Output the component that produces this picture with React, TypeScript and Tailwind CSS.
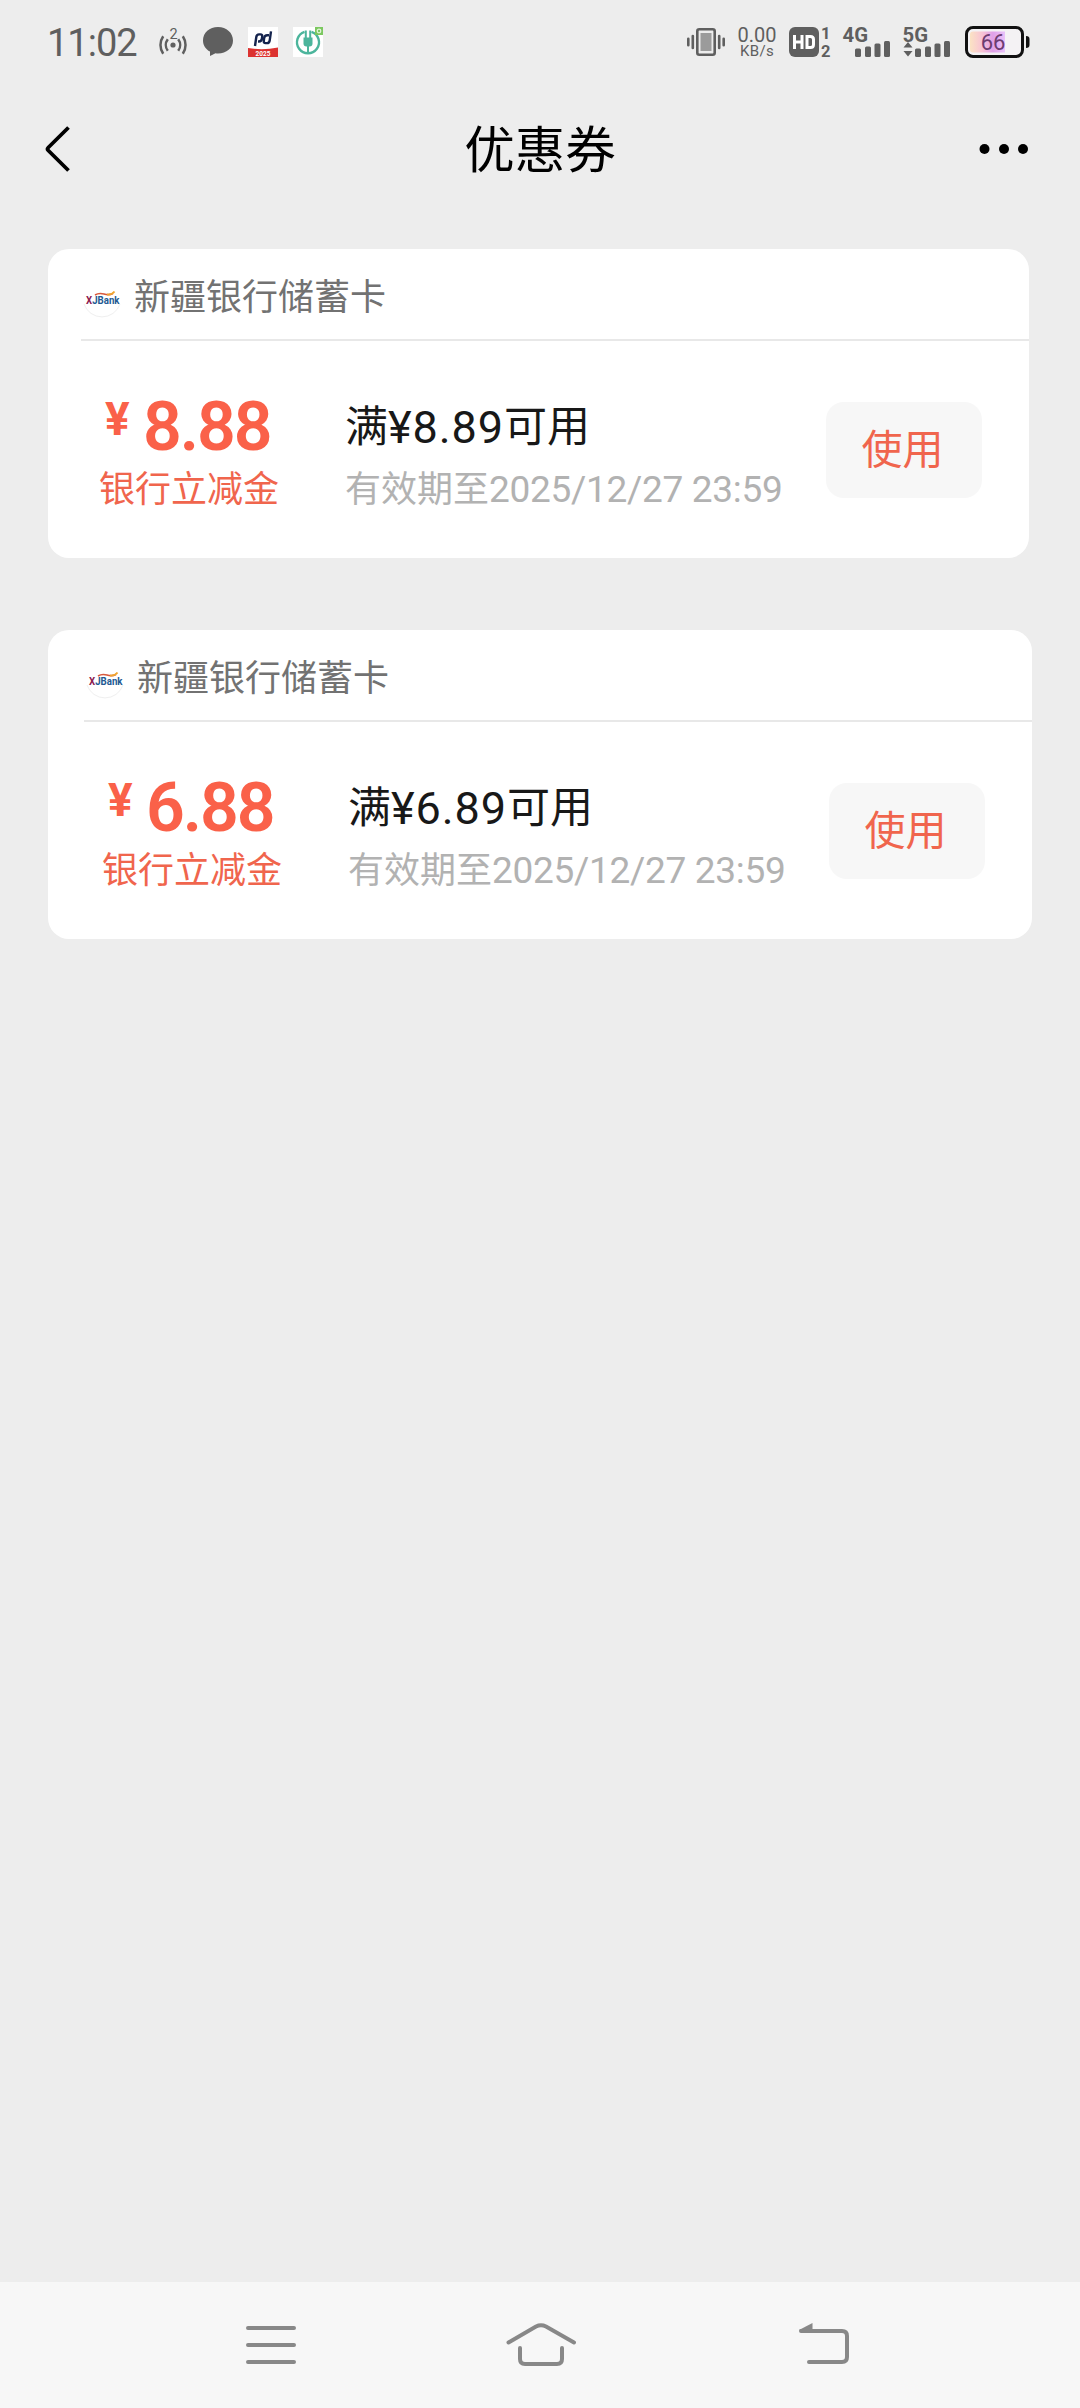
import { useState } from 'react';
import clsx from 'clsx';

interface Coupon {
  id: number;
  bank: string;
  amount: string;
  type: string;
  threshold: string;
  expires: string;
}

const coupons: Coupon[] = [
  {
    id: 1,
    bank: '新疆银行储蓄卡',
    amount: '8.88',
    type: '银行立减金',
    threshold: '8.89',
    expires: '2025/12/27 23:59',
  },
  {
    id: 2,
    bank: '新疆银行储蓄卡',
    amount: '6.88',
    type: '银行立减金',
    threshold: '6.89',
    expires: '2025/12/27 23:59',
  },
];

function HotspotIcon() {
  return (
    <svg className="overflow-visible" width="30" height="30" viewBox="0 0 30 30" fill="none" stroke="#5f5f5f" strokeWidth="2.5">
      <path d="M5.2 9.2a15.5 15.5 0 0 0 0 17.6M24.8 9.2a15.5 15.5 0 0 1 0 17.6" />
      <path d="M9.8 12.2a9.6 9.6 0 0 0 0 11.6M20.2 12.2a9.6 9.6 0 0 1 0 11.6" />
      <circle cx="15" cy="18" r="2.6" fill="#5f5f5f" stroke="none" />
      <text x="15.500" y="12" textAnchor="middle" fontSize="14.500" fill="#5f5f5f" stroke="none">2</text>
    </svg>
  );
}

function BubbleIcon() {
  return (
    <svg width="30" height="30" viewBox="0 0 30 30" fill="#5f5f5f">
      <path d="M15 0C6.500 0 0 5.800 0 13.400c0 4.700 2.700 8.700 7 11.200V29l5.500-2.800c.8.1 1.700.2 2.500.2 8.500 0 15-5.500 15-13S23.500 0 15 0z" />
    </svg>
  );
}

function BankAppIcon() {
  return (
    <svg className="overflow-visible" width="30" height="30" viewBox="0 0 30 30" fill="none">
      <rect width="30" height="30" fill="#fff" />
      <path d="M0 21q15 2.500 30-.5V30H0z" fill="#dc3230" />
      <g stroke="#14234d" strokeWidth="2.400" strokeLinejoin="round">
        <path d="M7 19L8.300 10q.4-2.600 2.700-2.600h1.500q2 0 1.700 2.300l-.3 2q-.4 2.800-3 2.800H10" />
        <path d="M23 4.300L21.700 13.500q-.4 2.600-2.700 2.600h-1.500q-2 0-1.700-2.300l.4-3q.4-2.600 3-2.600H21" />
      </g>
      <text x="15" y="28.500" textAnchor="middle" fontSize="6.500" fontWeight="700" fill="#fff">2025</text>
    </svg>
  );
}

function ChargeAppIcon() {
  return (
    <svg width="30" height="30" viewBox="0 0 30 30" fill="none">
      <rect width="30" height="30" fill="#fff" />
      <path d="M11.500 4.800a11 11 0 1 0 7 0" stroke="#4cb59c" strokeWidth="2.400" />
      <path d="M12.800 3.500V11M17.200 3.500V11M15 18v9" stroke="#4cb59c" strokeWidth="2" />
      <path d="M10.500 10.500h9v6q0 3-3 3h-3q-3 0-3-3z" fill="#4cb59c" />
      <rect x="22" y="0" width="8" height="8" fill="#7cc860" />
      <circle cx="26" cy="4" r="1.800" stroke="#e4f6dc" strokeWidth="1.200" />
    </svg>
  );
}

function VibrateIcon() {
  return (
    <svg width="38" height="28" viewBox="0 0 38 28" fill="none">
      <rect x="10.300" y="1.300" width="17.400" height="25.400" rx="2" fill="#ececec" stroke="#5f5f5f" strokeWidth="2.600" />
      <rect x="13.500" y="5" width="11" height="18" fill="#9b9b9b" />
      <g stroke="#5f5f5f" strokeWidth="2.600" strokeLinecap="round">
        <path d="M1.300 10.800v6.400M5.800 8v12M32.200 8v12M36.700 10.800v6.400" />
      </g>
    </svg>
  );
}

function HdIcon() {
  return (
    <svg className="overflow-visible" width="43" height="30" viewBox="0 0 43 30">
      <rect width="30" height="30" rx="6" fill="#5f5f5f" />
      <g stroke="#fff" strokeWidth="3" fill="none">
        <path d="M5.500 8v14M13 8v14M5.500 15H13M18 9.500h3.500q3 0 3 3v5q0 3-3 3H18z" />
      </g>
      <g fontSize="16.500" fontWeight="700" fill="#5f5f5f">
        <text x="32" y="12">1</text>
        <text x="32" y="29.500">2</text>
      </g>
    </svg>
  );
}

function SignalIcon({ label, arrows }: { label: string; arrows?: boolean }) {
  return (
    <svg className="overflow-visible" width="48" height="30" viewBox="0 0 48 30" fill="#5f5f5f">
      <text x="-.5" y="14.500" fontSize="20" fontWeight="700" textLength="25.500" lengthAdjust="spacingAndGlyphs">
        {label}
      </text>
      {arrows && <path d="M5 15l4.500 5.500h-9zM5 29.500L.5 24h9z" />}
      <rect x="12" y="21.500" width="6" height="8.500" rx="1.500" />
      <rect x="22" y="19.500" width="6" height="10.500" rx="1.500" />
      <rect x="31.500" y="16.500" width="6" height="13.500" rx="1.500" />
      <rect x="41" y="14" width="6" height="16" rx="1.500" />
    </svg>
  );
}

function BatteryIcon({ level }: { level: number }) {
  return (
    <svg width="65" height="32" viewBox="0 0 65 32">
      <defs>
        <linearGradient id="charge" x1="0" x2="1">
          <stop offset="0" stopColor="#fbe3c4" />
          <stop offset=".35" stopColor="#f8c3d4" />
          <stop offset=".65" stopColor="#e0a0e8" />
          <stop offset="1" stopColor="#e9c2fa" />
        </linearGradient>
      </defs>
      <rect x="1.500" y="1.500" width="56" height="29" rx="6.500" fill="#f4f2f4" stroke="#111" strokeWidth="3" />
      <path d="M8 5.500h32v21H8q-3 0-3-3v-15q0-3 3-3z" fill="url(#charge)" />
      <path d="M61 10q3.500 0 3.500 3v6q0 3-3.500 3z" fill="#111" />
      <text x="28" y="23.800" textAnchor="middle" fontSize="22" fill="#6d3c70">
        {level}
      </text>
    </svg>
  );
}

function StatusBar() {
  return (
    <div className="flex h-[84px] items-center justify-between pr-[50px] pl-[47px] text-[#5f5f5f]">
      <div className="flex items-center gap-[15px]">
        <span className="w-[96px] pt-[2px] text-[38px] leading-none tracking-[-1px]">11:02</span>
        <HotspotIcon />
        <BubbleIcon />
        <BankAppIcon />
        <ChargeAppIcon />
      </div>
      <div className="flex items-center">
        <VibrateIcon />
        <div className="ml-[13px] flex w-[38px] flex-col items-center">
          <span className="text-[20px] leading-[18px]">0.00</span>
          <span className="text-[15px] leading-[15px] tracking-[0.3px]">KB/s</span>
        </div>
        <div className="ml-[13px]"><HdIcon /></div>
        <div className="ml-[11px]"><SignalIcon label="4G" /></div>
        <div className="ml-3"><SignalIcon label="5G" arrows /></div>
        <div className="ml-[14px]"><BatteryIcon level={66} /></div>
      </div>
    </div>
  );
}

function Header() {
  return (
    <header className="flex h-[130px] items-center justify-between px-[45px]">
      <button type="button" aria-label="返回" className="w-[56px]">
        <svg width="27" height="46" viewBox="0 0 27 46" fill="none" stroke="#000" strokeWidth="3.800">
          <path d="M23.500 1.500L3.300 21.500q-1.500 1.500 0 3l20.200 20" />
        </svg>
      </button>
      <h1 className="pt-[5px] text-[50.500px] leading-none text-black">优惠券</h1>
      <button type="button" aria-label="更多" className="flex w-[56px]">
        <svg width="50" height="12" viewBox="0 0 50 12">
          <circle cx="5.500" cy="6" r="5" />
          <circle cx="25" cy="6" r="5" />
          <circle cx="44" cy="6" r="5" />
        </svg>
      </button>
    </header>
  );
}

function BankLogo() {
  return (
    <svg className="overflow-visible" width="40" height="40" viewBox="0 0 40 40" fill="none">
      <circle cx="21" cy="19" r="19" fill="#fff" />
      <path d="M3 25a19 19 0 0 0 36 0" stroke="#efefef" strokeWidth="1" />
      <path d="M14 16q4-2.500 9-1t9-.5" stroke="#d8593c" strokeWidth="1.600" />
      <path d="M26 15.500q5 .5 7.500-3" stroke="#efa52f" strokeWidth="1.800" />
      <text x="5" y="24.500" fontSize="11.500" fontWeight="700" fill="#235a92" textLength="33.500" lengthAdjust="spacingAndGlyphs">
        <tspan fill="#8c2050">X</tspan>JBank
      </text>
    </svg>
  );
}

function CouponCard({ coupon, wide }: { coupon: Coupon; wide: boolean }) {
  return (
    <section className={clsx('h-[309px] rounded-[21px] bg-white', wide ? 'w-[984px] pl-9' : 'w-[981px] pl-[33px]')}>
      <div className="flex h-[92px] items-center border-b-2 border-[#e8e8e8]">
        <div className="mt-[9px]"><BankLogo /></div>
        <span className="mt-2 ml-[13px] text-[36px] leading-none text-[#727272]">{coupon.bank}</span>
      </div>
      <div className="flex">
        <div className="w-[218px] pt-[51px] pl-[18px] text-[#fa6149]">
          <div className="flex h-[64px] items-start pl-[6px] font-bold">
            <span className="w-[38px] text-[46px] leading-[54px]">¥</span>
            <span className="text-[68px] leading-[70px] font-semibold tracking-[-2.100px]">{coupon.amount}</span>
          </div>
          <div className="mt-[12px] text-[36px] leading-[44px] text-[#f0654d]">{coupon.type}</div>
        </div>
        <div className="w-[493px] pt-[58px] pl-[46px]">
          <div className="flex h-[56px] items-center text-[43px] leading-none whitespace-nowrap text-[#181818]">
            满<span className="text-[45px] tracking-[0.900px]">¥{coupon.threshold}</span>可用
          </div>
          <div className="mt-[13px] flex text-[36px] leading-[44px] whitespace-nowrap text-[#b2b2b2]">
            有效期至<span className="text-[37px] tracking-[-0.300px]">{coupon.expires}</span>
          </div>
        </div>
        <button type="button" className="mt-[61px] ml-[34px] h-[96px] w-[156px] rounded-[18px] bg-[#f7f7f7] pr-[3px] text-[41px] leading-none text-[#f0654d]">
          使用
        </button>
      </div>
    </section>
  );
}

function NavBar() {
  return (
    <nav className="flex h-[126px] items-center bg-[#f7f7f7] pl-[246px]">
      <svg width="50" height="44" viewBox="0 0 50 44" fill="none" stroke="#888" strokeWidth="4" strokeLinecap="round">
        <path d="M2 5h46M2 22h46M2 39h46" />
      </svg>
      <svg className="ml-[209px]" width="72" height="46" viewBox="0 0 72 46" fill="none" stroke="#888" strokeWidth="4" strokeLinecap="round">
        <path d="M3.500 20.500L31 4.500q5-2.500 10 0l28 16" />
        <path d="M15 26v11q0 5 5 5h32q5 0 5-5V26" />
      </svg>
      <svg className="ml-[220px]" width="54" height="46" viewBox="0 0 54 46" fill="none" stroke="#888" strokeWidth="4" strokeLinecap="round">
        <path d="M4 9h41q5 0 5 5v21q0 5-5 5H12" />
        <path d="M2 8L15.500 1v8H4z" fill="#888" stroke="none" />
      </svg>
    </nav>
  );
}

export default function App() {
  const [list] = useState<Coupon[]>(coupons);

  return (
    <div className="flex h-[2408px] w-[1080px] flex-col bg-[#ededed] font-['Roboto','Noto_Sans_CJK_SC',sans-serif]">
      <StatusBar />
      <Header />
      <main className="flex flex-1 flex-col gap-[72px] pt-[35px] pl-[48px]">
        {list.map((coupon, i) => (
          <CouponCard key={coupon.id} coupon={coupon} wide={i > 0} />
        ))}
      </main>
      <NavBar />
    </div>
  );
}
